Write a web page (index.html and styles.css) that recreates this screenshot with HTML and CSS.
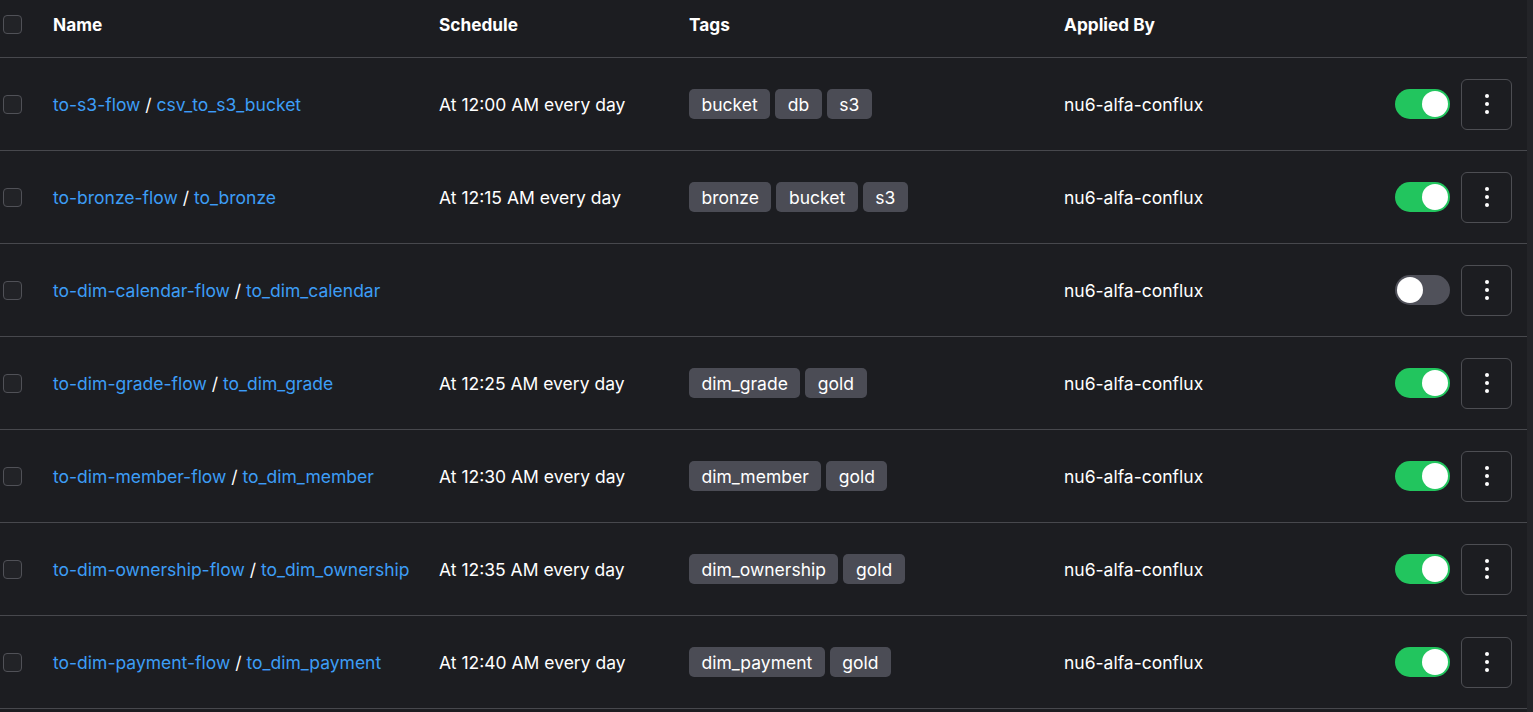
FILE: index.html
```html
<!DOCTYPE html>
<html>
<head>
<meta charset="utf-8">
<link rel="stylesheet" href="styles.css">
</head>
<body>
<div class="page">
  <div class="table">
    <div class="row head">
      <div class="cell c-check"><span class="checkbox"></span></div>
      <div class="cell c-name">Name</div>
      <div class="cell c-sched">Schedule</div>
      <div class="cell c-tags">Tags</div>
      <div class="cell c-by">Applied By</div>
      <div class="cell c-act"></div>
    </div>

    <div class="row">
      <div class="cell c-check"><span class="checkbox"></span></div>
      <div class="cell c-name"><a class="link">to-s3-flow</a> / <a class="link">csv_to_s3_bucket</a></div>
      <div class="cell c-sched">At 12:00 AM every day</div>
      <div class="cell c-tags"><span class="tag">bucket</span><span class="tag">db</span><span class="tag">s3</span></div>
      <div class="cell c-by">nu6-alfa-conflux</div>
      <div class="cell c-act"><span class="toggle on"><span class="knob"></span></span><button class="menu"><span class="dots"><i></i><i></i><i></i></span></button></div>
    </div>

    <div class="row">
      <div class="cell c-check"><span class="checkbox"></span></div>
      <div class="cell c-name"><a class="link">to-bronze-flow</a> / <a class="link">to_bronze</a></div>
      <div class="cell c-sched">At 12:15 AM every day</div>
      <div class="cell c-tags"><span class="tag">bronze</span><span class="tag">bucket</span><span class="tag">s3</span></div>
      <div class="cell c-by">nu6-alfa-conflux</div>
      <div class="cell c-act"><span class="toggle on"><span class="knob"></span></span><button class="menu"><span class="dots"><i></i><i></i><i></i></span></button></div>
    </div>

    <div class="row">
      <div class="cell c-check"><span class="checkbox"></span></div>
      <div class="cell c-name"><a class="link">to-dim-calendar-flow</a> / <a class="link">to_dim_calendar</a></div>
      <div class="cell c-sched"></div>
      <div class="cell c-tags"></div>
      <div class="cell c-by">nu6-alfa-conflux</div>
      <div class="cell c-act"><span class="toggle"><span class="knob"></span></span><button class="menu"><span class="dots"><i></i><i></i><i></i></span></button></div>
    </div>

    <div class="row">
      <div class="cell c-check"><span class="checkbox"></span></div>
      <div class="cell c-name"><a class="link">to-dim-grade-flow</a> / <a class="link">to_dim_grade</a></div>
      <div class="cell c-sched">At 12:25 AM every day</div>
      <div class="cell c-tags"><span class="tag">dim_grade</span><span class="tag">gold</span></div>
      <div class="cell c-by">nu6-alfa-conflux</div>
      <div class="cell c-act"><span class="toggle on"><span class="knob"></span></span><button class="menu"><span class="dots"><i></i><i></i><i></i></span></button></div>
    </div>

    <div class="row">
      <div class="cell c-check"><span class="checkbox"></span></div>
      <div class="cell c-name"><a class="link">to-dim-member-flow</a> / <a class="link">to_dim_member</a></div>
      <div class="cell c-sched">At 12:30 AM every day</div>
      <div class="cell c-tags"><span class="tag">dim_member</span><span class="tag">gold</span></div>
      <div class="cell c-by">nu6-alfa-conflux</div>
      <div class="cell c-act"><span class="toggle on"><span class="knob"></span></span><button class="menu"><span class="dots"><i></i><i></i><i></i></span></button></div>
    </div>

    <div class="row">
      <div class="cell c-check"><span class="checkbox"></span></div>
      <div class="cell c-name"><a class="link">to-dim-ownership-flow</a> / <a class="link">to_dim_ownership</a></div>
      <div class="cell c-sched">At 12:35 AM every day</div>
      <div class="cell c-tags"><span class="tag">dim_ownership</span><span class="tag">gold</span></div>
      <div class="cell c-by">nu6-alfa-conflux</div>
      <div class="cell c-act"><span class="toggle on"><span class="knob"></span></span><button class="menu"><span class="dots"><i></i><i></i><i></i></span></button></div>
    </div>

    <div class="row">
      <div class="cell c-check"><span class="checkbox"></span></div>
      <div class="cell c-name"><a class="link">to-dim-payment-flow</a> / <a class="link">to_dim_payment</a></div>
      <div class="cell c-sched">At 12:40 AM every day</div>
      <div class="cell c-tags"><span class="tag">dim_payment</span><span class="tag">gold</span></div>
      <div class="cell c-by">nu6-alfa-conflux</div>
      <div class="cell c-act"><span class="toggle on"><span class="knob"></span></span><button class="menu"><span class="dots"><i></i><i></i><i></i></span></button></div>
    </div>
  </div>
  <div class="scrolltrack"></div>
</div>
</body>
</html>
```

FILE: styles.css
```css
html, body {
  margin: 0;
  padding: 0;
  background: #1c1d21;
  height: 100%;
  overflow: hidden;
}
body {
  font-family: Inter, "Noto Sans", sans-serif;
  font-size: 17.5px;
  color: #ffffff;
}
.page {
  display: flex;
  height: 712px;
}
.table {
  width: 1527px;
  display: flex;
  flex-direction: column;
}
.scrolltrack {
  width: 6px;
  background: #232428;
}
.row {
  display: grid;
  grid-template-columns: 53px 386px 250px 375px 1fr auto;
  align-items: center;
  height: 92px;
  border-bottom: 1px solid #47484d;
}
.row.head {
  height: 57px;
  font-weight: 700;
  font-size: 17.25px;
  align-items: start;
}
.row.head .cell {
  padding-top: 14px;
}
.row.head .c-check {
  padding-top: 15px;
}
.cell {
  white-space: nowrap;
}
.c-name, .c-sched, .c-by {
  padding-top: 1px;
}
.c-check {
  padding-left: 3px;
  display: flex;
}
.checkbox {
  width: 17px;
  height: 17px;
  border: 1px solid #505157;
  border-radius: 4px;
  background: #222327;
}
.link {
  color: #3d9df6;
}
.c-tags {
  display: flex;
  gap: 5px;
}
.tag {
  background: #4b4c55;
  border-radius: 5px;
  height: 30px;
  line-height: 31px;
  padding: 0 12.5px;
}
.c-act {
  display: flex;
  align-items: center;
  padding-right: 15px;
  gap: 11px;
}
.toggle {
  width: 55px;
  height: 30px;
  border-radius: 15px;
  background: #50515a;
  display: flex;
  align-items: center;
  padding: 0 2px;
  box-sizing: border-box;
}
.toggle.on {
  background: #22c55e;
  justify-content: flex-end;
}
.knob {
  width: 26px;
  height: 26px;
  border-radius: 50%;
  background: #ffffff;
}
.menu {
  width: 51px;
  height: 51px;
  border: 1px solid #4d4e53;
  border-radius: 6px;
  background: transparent;
  display: flex;
  align-items: center;
  justify-content: center;
  padding: 0;
}
.dots {
  display: flex;
  flex-direction: column;
  gap: 4px;
}
.dots i {
  display: block;
  width: 4px;
  height: 4px;
  border-radius: 50%;
  background: #ffffff;
}
```
